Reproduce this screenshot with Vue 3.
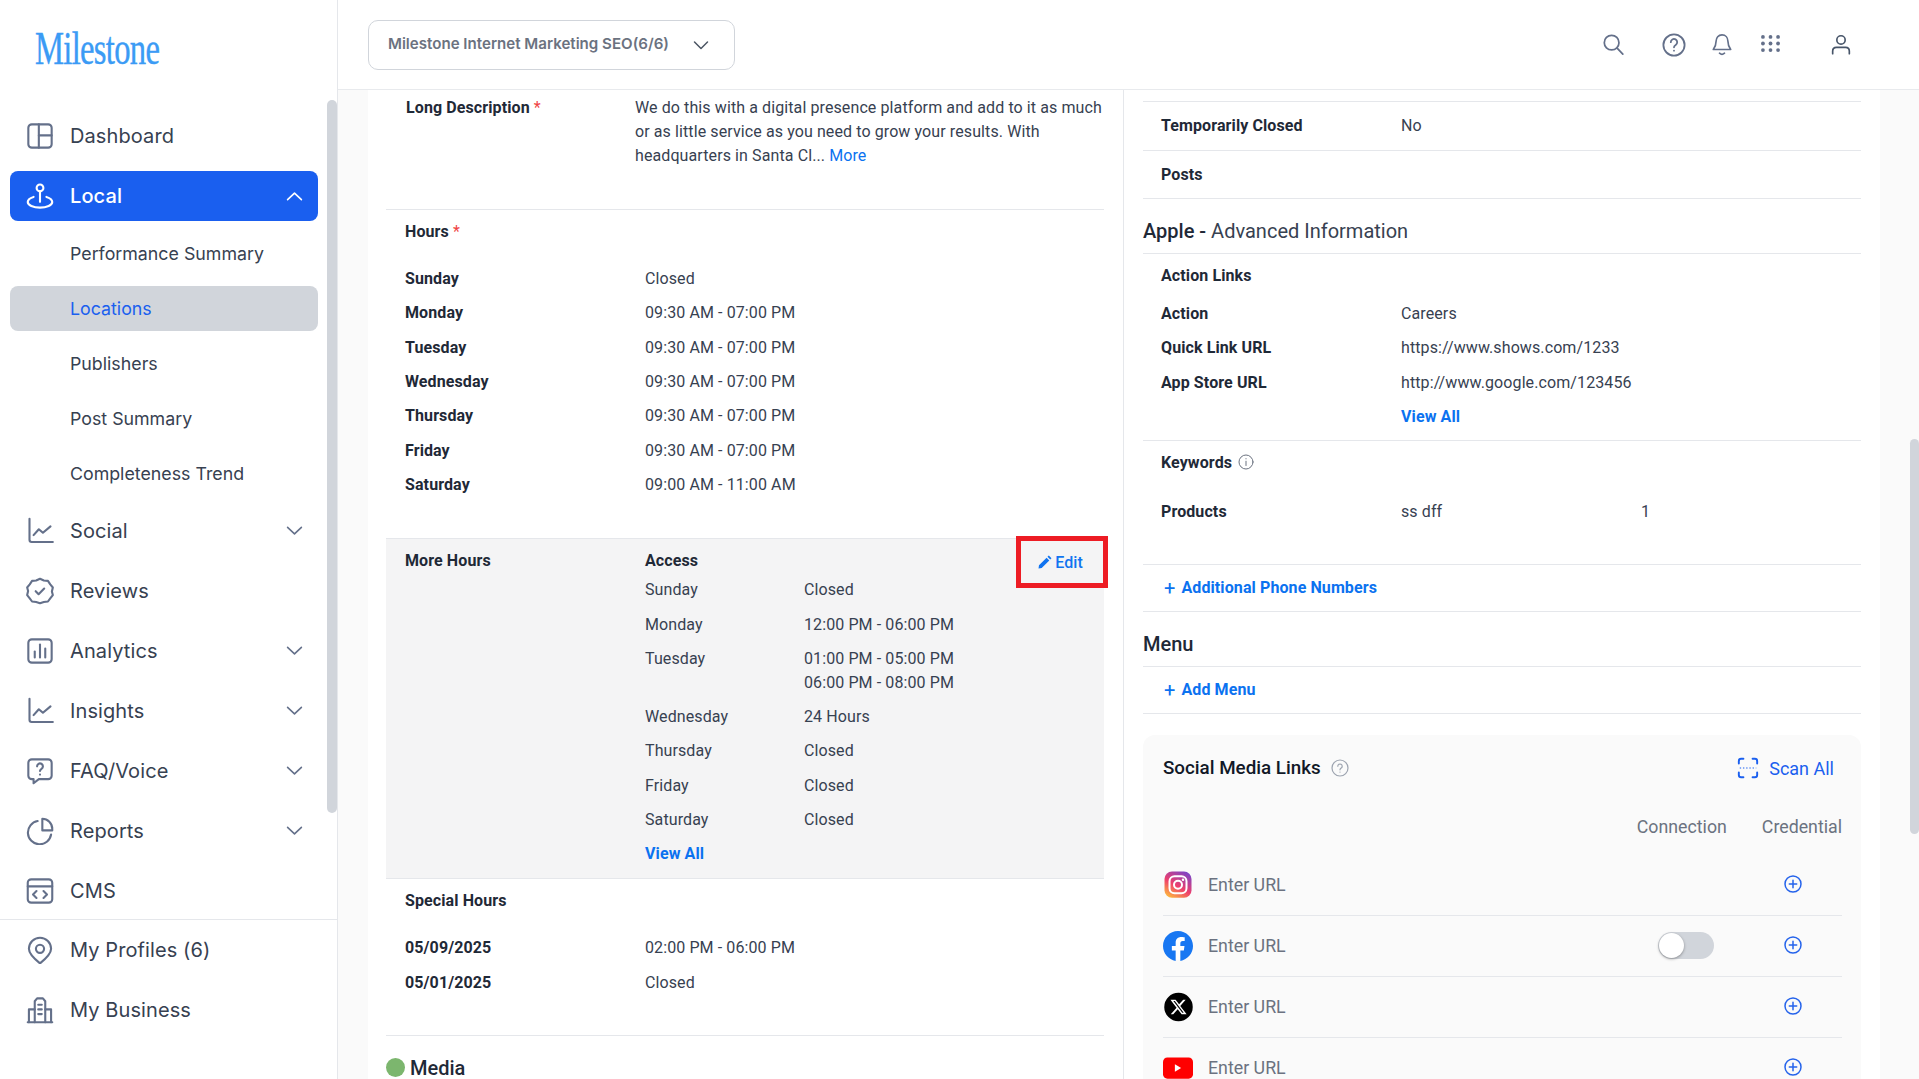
<template>
  <div class="app">
    <aside class="sidebar">
      <div class="logo-wrap"><span class="logo">Milestone</span></div>
      <nav class="nav">
        <template v-for="item in navItems" :key="item.label">
          <div class="nav-item" :class="{ active: item.active }">
            <svg class="nav-icon" viewBox="0 0 24 24" fill="none" stroke="currentColor" stroke-width="1.8" stroke-linecap="round" stroke-linejoin="round">
              <path v-for="d in item.icon" :key="d" :d="d" />
            </svg>
            <span class="nav-label">{{ item.label }}</span>
            <svg v-if="item.chevron" class="nav-chevron" viewBox="0 0 16 16" fill="none" stroke="currentColor" stroke-width="1.5" stroke-linecap="round" stroke-linejoin="round">
              <path :d="item.active ? 'M1.5 11 8 4.8l6.5 6.2' : 'M1.5 5 8 11.2 14.5 5'" />
            </svg>
          </div>
          <div v-if="item.active" class="sub-nav">
            <div v-for="sub in subItems" :key="sub" class="sub-item" :class="{ current: sub === 'Locations' }">{{ sub }}</div>
          </div>
        </template>
        <div class="nav-split"></div>
        <div v-for="item in bottomItems" :key="item.label" class="nav-item">
          <svg class="nav-icon" viewBox="0 0 24 24" fill="none" stroke="currentColor" stroke-width="1.8" stroke-linecap="round" stroke-linejoin="round">
            <path v-for="d in item.icon" :key="d" :d="d" />
          </svg>
          <span class="nav-label">{{ item.label }}</span>
        </div>
      </nav>
      <div class="side-scroll"></div>
    </aside>

    <div class="page">
      <header class="topbar">
        <div class="account-select">
          <span class="account-name">Milestone Internet Marketing SEO(6/6)</span>
          <svg viewBox="0 0 16 16" fill="none" stroke="currentColor" stroke-width="1.5" stroke-linecap="round" stroke-linejoin="round"><path d="M1.5 5 8 11.5 14.5 5" /></svg>
        </div>
        <div class="top-icons">
          <svg class="top-icon search" viewBox="0 0 24 24" fill="none" stroke="currentColor" stroke-width="1.9" stroke-linecap="round"><circle cx="10.5" cy="10.5" r="8" /><path d="m16.5 16.5 6.2 6.5" /></svg>
          <svg class="top-icon help" viewBox="0 0 24 24" fill="none" stroke="currentColor" stroke-width="1.8" stroke-linecap="round"><circle cx="12" cy="12" r="10.6" /><path d="M8.8 9.2a3.2 3.2 0 1 1 4.9 2.7c-1 .7-1.7 1.3-1.7 2.4" /><path d="M12 17.6v.1" /></svg>
          <svg class="top-icon bell" viewBox="0 0 24 24" fill="none" stroke="currentColor" stroke-width="1.8" stroke-linecap="round" stroke-linejoin="round"><path d="M12 1.5c-4 0-6.4 3-6.4 6.8 0 4-1 6.3-3.1 9.2h19c-2.1-2.9-3.1-5.2-3.1-9.2 0-3.8-2.4-6.8-6.4-6.8Z" /><path d="M9.3 21.5c1.5 1.3 3.9 1.3 5.4 0" /></svg>
          <svg class="top-icon grid" viewBox="0 0 20 18" fill="currentColor"><circle v-for="dot in gridDots" :key="dot.x + '-' + dot.y" :cx="dot.x" :cy="dot.y" r="2" /></svg>
          <svg class="top-icon user" viewBox="0 0 24 24" fill="none" stroke="currentColor" stroke-width="2" stroke-linecap="round"><circle cx="12" cy="6.5" r="5" /><path d="M2 23v-3c0-2.800 2-4.500 4.500-4.500h11c2.500 0 4.500 1.700 4.500 4.500v3" /></svg>
        </div>
      </header>

      <main class="content">
        <section class="col col-left">
          <div class="desc-row">
            <div class="label">Long Description <span class="req">*</span></div>
            <div class="desc-text">We do this with a digital presence platform and add to it as much or as little service as you need to grow your results. With headquarters in Santa Cl... <a class="link">More</a></div>
          </div>

          <div class="block-title">Hours <span class="req">*</span></div>
          <div class="hours">
            <div v-for="row in hours" :key="row[0]" class="hours-row">
              <div class="label">{{ row[0] }}</div>
              <div class="value">{{ row[1] }}</div>
            </div>
          </div>

          <div class="more-hours">
            <div class="label">More Hours</div>
            <div class="more-body">
              <div class="label">Access</div>
              <div v-for="row in moreHours" :key="row.day" class="more-row">
                <div class="value">{{ row.day }}</div>
                <div class="value">
                  <div v-for="t in row.times" :key="t">{{ t }}</div>
                </div>
              </div>
              <a class="link strong more-link">View All</a>
            </div>
            <div class="edit-box">
              <svg viewBox="0 0 14 14" fill="currentColor"><path d="M0.5 13.5 1 10.3 8.6 2.7 11.3 5.4 3.7 13ZM9.5 1.8 10.8 .5 13.5 3.2 12.2 4.5Z" /></svg>
              <span>Edit</span>
            </div>
          </div>

          <div class="block-title">Special Hours</div>
          <div class="hours special">
            <div v-for="row in specialHours" :key="row[0]" class="hours-row">
              <div class="label">{{ row[0] }}</div>
              <div class="value">{{ row[1] }}</div>
            </div>
          </div>

          <div class="media-title"><span class="dot"></span>Media</div>
        </section>

        <section class="col col-right">
          <div class="info-row first"><div class="label">Temporarily Closed</div><div class="value">No</div></div>
          <div class="info-row"><div class="label">Posts</div></div>

          <h2 class="apple-title"><b>Apple</b> <b class="dash">-</b> Advanced Information</h2>

          <div class="links-block">
            <div class="sub-title">Action Links</div>
            <div v-for="row in actionLinks" :key="row[0]" class="link-row">
              <div class="label">{{ row[0] }}</div>
              <div class="value">{{ row[1] }}</div>
            </div>
            <div class="link-row"><div></div><a class="link strong">View All</a></div>
          </div>

          <div class="keywords-block">
            <div class="sub-title">
              Keywords
              <svg class="info-icon" viewBox="0 0 16 16" fill="none" stroke="#6b7280" stroke-width="1" stroke-linecap="round"><circle cx="8" cy="8" r="7" /><path d="M8 7.2v4.3M8 4.600v.3" /></svg>
            </div>
            <div class="keyword-row">
              <div class="label">Products</div>
              <div class="value kw">ss dff</div>
              <div class="value">1</div>
            </div>
          </div>

          <div class="add-row"><span class="plus">+</span>Additional Phone Numbers</div>
          <h2 class="menu-title">Menu</h2>
          <div class="add-row"><span class="plus">+</span>Add Menu</div>

          <div class="social-card">
            <div class="social-head">
              <div class="social-title">
                Social Media Links
                <svg class="help-icon" viewBox="0 0 18 18" fill="none" stroke="#9ca3af" stroke-width="1.2" stroke-linecap="round"><circle cx="9" cy="9" r="8" /><path d="M6.8 7.2a2.2 2.2 0 1 1 3.400 1.900c-.7.500-1.200.9-1.200 1.700M9 13v.1" /></svg>
              </div>
              <div class="scan-all">
                <svg viewBox="0 0 24 24" fill="none" stroke="currentColor" stroke-width="2.1" stroke-linecap="round"><path d="M7 2H4.500A2.500 2.500 0 0 0 2 4.500V7M17 2h2.500A2.500 2.500 0 0 1 22 4.500V7M7 22H4.500A2.500 2.500 0 0 1 2 19.500V17M17 22h2.500a2.500 2.500 0 0 0 2.500-2.500V17" /><path d="M3 12h18" stroke-width="1.3" stroke-dasharray="1.5 2" stroke-linecap="butt" /></svg>
                <span>Scan All</span>
              </div>
            </div>
            <div class="social-cols"><span>Connection</span><span>Credential</span></div>

            <div v-for="row in socials" :key="row.name" class="social-row">
              <div class="social-left">
                <svg v-if="row.name === 'instagram'" class="social-icon" viewBox="0 0 24 24">
                  <defs>
                    <linearGradient id="ig" x1="0.2" y1="1" x2="0.8" y2="0">
                      <stop offset="0" stop-color="#fdb63f" />
                      <stop offset="0.45" stop-color="#ee3f6c" />
                      <stop offset="1" stop-color="#7a45c8" />
                    </linearGradient>
                  </defs>
                  <rect x="1.2" y="1.2" width="21.6" height="21" rx="6" fill="url(#ig)" />
                  <rect x="5.2" y="5" width="13.6" height="13.6" rx="4" fill="none" stroke="#fff" stroke-width="1.6" />
                  <circle cx="12" cy="11.8" r="3.2" fill="none" stroke="#fff" stroke-width="1.6" />
                  <circle cx="16" cy="7.8" r="1" fill="#fff" />
                </svg>
                <svg v-else-if="row.name === 'facebook'" class="social-icon" viewBox="0 0 24 24">
                  <circle cx="12" cy="12" r="11" fill="#fff" />
                  <path fill="#1877f2" d="M24 12.073c0-6.627-5.373-12-12-12s-12 5.373-12 12c0 5.990 4.388 10.954 10.125 11.854v-8.385H7.078v-3.470h3.047V9.430c0-3.007 1.792-4.669 4.533-4.669 1.312 0 2.686.235 2.686.235v2.953H15.830c-1.491 0-1.956.925-1.956 1.874v2.250h3.328l-.532 3.470h-2.796v8.385C19.612 23.027 24 18.062 24 12.073z" />
                </svg>
                <svg v-else-if="row.name === 'x'" class="social-icon" viewBox="0 0 24 24">
                  <circle cx="12.4" cy="12" r="11.4" fill="#000" />
                  <path fill="#fff" transform="translate(5.2 4.800) scale(.6)" d="M18.244 2.250h3.308l-7.227 8.260 8.502 11.240H16.170l-5.214-6.817L4.990 21.750H1.680l7.730-8.835L1.254 2.250H8.080l4.713 6.231zm-1.161 17.520h1.833L7.084 4.126H5.117z" />
                </svg>
                <svg v-else class="social-icon" viewBox="0 0 24 24">
                  <rect x="0" y="3.5" width="24" height="17" rx="3.5" fill="#ff0000" />
                  <path d="M9.500 9v6l5-3z" fill="#fff" />
                </svg>
                <span class="url-hint">Enter URL</span>
              </div>
              <div class="social-toggle"><span v-if="row.toggle" class="toggle"><i></i></span></div>
              <svg class="add-icon" viewBox="0 0 18 18" fill="none" stroke="#2563eb" stroke-width="1.5" stroke-linecap="round"><circle cx="9" cy="9" r="8" /><path d="M9 5.300v7.400M5.300 9h7.400" /></svg>
            </div>
          </div>
        </section>
      </main>
      <div class="main-scroll"></div>
    </div>
  </div>
</template>

<script setup>
const chart = ['M3 1.500V19.500c0 1.100.7 1.900 1.800 1.900H23', 'M6.500 15.500l4.500-5 3.500 3 6.500-5.500']
const navItems = [
  { label: 'Dashboard', icon: ['M5 2h14a3 3 0 0 1 3 3v14a3 3 0 0 1-3 3H5a3 3 0 0 1-3-3V5a3 3 0 0 1 3-3Z', 'M11 2v20', 'M11 11.500h11'] },
  { label: 'Local', active: true, chevron: true, icon: ['M12 2.200a2.900 2.900 0 1 1 0 5.800 2.900 2.900 0 0 1 0-5.800Z', 'M12 8v9', 'M6.500 12.800C3.300 13.800 1.500 15.300 1.500 17.200c0 2.700 4.700 4.800 10.500 4.800s10.500-2.100 10.500-4.800c0-1.900-1.800-3.400-5-4.400'] },
  { label: 'Social', chevron: true, icon: chart },
  { label: 'Reviews', icon: ['M12 1.500l3.300 1.500 3.500.3 2 3 2.200 2.700-.8 3.500.8 3-2.200 2.800-2 2.700-3.500.5L12 22.500l-3.300-1-3.500-.5-2-2.700L1 15.500l.8-3.500L1 9l2.200-2.700 2-3 3.500-.3Z', 'M8.300 12.200l2.500 2.500 4.800-4.800'] },
  { label: 'Analytics', chevron: true, icon: ['M5 2h14a3 3 0 0 1 3 3v14a3 3 0 0 1-3 3H5a3 3 0 0 1-3-3V5a3 3 0 0 1 3-3Z', 'M7.500 12.500v5', 'M12 6.500v11', 'M16.500 10v7.500'] },
  { label: 'Insights', chevron: true, icon: chart },
  { label: 'FAQ/Voice', chevron: true, icon: ['M5 2h14a3 3 0 0 1 3 3v11a3 3 0 0 1-3 3H11l-4.500 3.500V19H5a3 3 0 0 1-3-3V5a3 3 0 0 1 3-3Z', 'M9.500 8a2.500 2.500 0 1 1 3.800 2.100c-.8.500-1.300.9-1.300 1.900', 'M12 15v.1'] },
  { label: 'Reports', chevron: true, icon: ['M10 3.500A10 10 0 1 0 21.500 15', 'M14 1.500a8.500 8.500 0 0 1 8.500 8.500v1.500H14Z'] },
  { label: 'CMS', icon: ['M4.500 2h15A3 3 0 0 1 22.500 5v14a3 3 0 0 1-3 3h-15a3 3 0 0 1-3-3V5a3 3 0 0 1 3-3Z', 'M1.500 8h21', 'M9 12l-3 3 3 3', 'M15 12l3 3-3 3'] },
]
const bottomItems = [
  { label: 'My Profiles (6)', icon: ['M12 1.500a9.500 9.500 0 0 1 9.500 9.500c0 4.500-4.500 8.500-9.500 12.500C7 19.500 2.500 15.500 2.500 11A9.500 9.500 0 0 1 12 1.500Z', 'M12 7.500a3.500 3.500 0 1 1 0 7 3.500 3.500 0 0 1 0-7Z'] },
  { label: 'My Business', icon: ['M1.500 22.500h21', 'M2.500 22.500V11.500h5', 'M21.500 22.500V11.500h-5', 'M7.500 22.500V4.500l2-2.500h5l2 2.500v18', 'M10.500 7.500h3', 'M10.500 11.500h3', 'M10.500 15.500h3'] },
]
const subItems = ['Performance Summary', 'Locations', 'Publishers', 'Post Summary', 'Completeness Trend']

const gridDots = []
for (const y of [2, 9, 16]) {
  for (const x of [2, 10, 18]) gridDots.push({ x, y })
}

const hours = [
  ['Sunday', 'Closed'],
  ['Monday', '09:30 AM - 07:00 PM'],
  ['Tuesday', '09:30 AM - 07:00 PM'],
  ['Wednesday', '09:30 AM - 07:00 PM'],
  ['Thursday', '09:30 AM - 07:00 PM'],
  ['Friday', '09:30 AM - 07:00 PM'],
  ['Saturday', '09:00 AM - 11:00 AM'],
]
const moreHours = [
  { day: 'Sunday', times: ['Closed'] },
  { day: 'Monday', times: ['12:00 PM - 06:00 PM'] },
  { day: 'Tuesday', times: ['01:00 PM - 05:00 PM', '06:00 PM - 08:00 PM'] },
  { day: 'Wednesday', times: ['24 Hours'] },
  { day: 'Thursday', times: ['Closed'] },
  { day: 'Friday', times: ['Closed'] },
  { day: 'Saturday', times: ['Closed'] },
]
const specialHours = [
  ['05/09/2025', '02:00 PM - 06:00 PM'],
  ['05/01/2025', 'Closed'],
]
const actionLinks = [
  ['Action', 'Careers'],
  ['Quick Link URL', 'https://www.shows.com/1233'],
  ['App Store URL', 'http://www.google.com/123456'],
]
const socials = [
  { name: 'instagram' },
  { name: 'facebook', toggle: true },
  { name: 'x' },
  { name: 'youtube' },
]
</script>

<style>
html, body { margin: 0; height: 100%; overflow: hidden; background: #fff; }
</style>

<style scoped>
.app {
  display: flex;
  width: 1919px;
  height: 1079px;
  overflow: hidden;
  font-family: Roboto, "Liberation Sans", sans-serif;
  letter-spacing: .1px;
  background: #fff;
}

/* sidebar */
.sidebar {
  position: relative;
  flex: 0 0 338px;
  box-sizing: border-box;
  border-right: 1px solid #e5e7eb;
  font-family: Inter, "Liberation Sans", sans-serif;
  letter-spacing: 0;
}
.logo-wrap { height: 111px; box-sizing: border-box; padding: 22px 0 0 35px; }
.logo {
  display: inline-block;
  font-family: "Liberation Serif", serif;
  font-size: 46px;
  line-height: 54px;
  color: #3b9bf5;
  letter-spacing: -1px;
  -webkit-text-stroke: .4px #3b9bf5;
  transform: scaleX(.71);
  transform-origin: left center;
}
.nav { display: flex; flex-direction: column; }
.nav-item {
  display: flex;
  align-items: center;
  gap: 16px;
  width: 308px;
  height: 50px;
  margin: 0 0 10px 10px;
  padding: 0 16px;
  box-sizing: border-box;
  border-radius: 8px;
  color: #64708a;
}
.nav-item.active { background: #1a5fef; color: #fff; margin-bottom: 9.5px; }
.nav-icon { width: 28px; height: 28px; flex: none; }
.nav-label { flex: 1; font-size: 20px; letter-spacing: .1px; color: #374151; }
.active .nav-label { color: #fff; font-weight: 500; }
.nav-chevron { width: 17px; height: 17px; margin-right: -1px; }
.sub-nav { display: flex; flex-direction: column; gap: 10px; margin-bottom: 10px; }
.sub-item {
  width: 308px;
  height: 45px;
  margin-left: 10px;
  padding-left: 60px;
  box-sizing: border-box;
  border-radius: 8px;
  font-size: 17.8px;
  line-height: 45px;
  color: #374151;
}
.sub-item.current { background: #d1d5db; color: #1a5fef; }
.nav-split { height: 1px; margin: -7px 0 5px; background: #e5e7eb; }
.side-scroll {
  position: absolute;
  left: 327px;
  top: 100px;
  width: 10px;
  height: 713px;
  border-radius: 5px;
  background: #d1d5db;
}

/* top bar */
.page { position: relative; flex: 1; min-width: 0; }
.topbar {
  display: flex;
  align-items: center;
  justify-content: space-between;
  height: 90px;
  box-sizing: border-box;
  padding: 0 0 0 30px;
  border-bottom: 1px solid #e8eaed;
}
.account-select {
  display: flex;
  align-items: center;
  justify-content: space-between;
  flex: none;
  width: 367px;
  height: 50px;
  margin-top: 1px;
  box-sizing: border-box;
  padding: 0 25px 0 19px;
  border: 1px solid #d1d5db;
  border-radius: 10px;
  font-family: Inter, "Liberation Sans", sans-serif;
  font-size: 15.1px;
  font-weight: 600;
  letter-spacing: 0;
  color: #6b7280;
}
.account-name { padding-bottom: 3px; }
.account-select svg { width: 16px; height: 16px; color: #4b5563; }
.top-icons { position: relative; flex: 1; height: 90px; color: #64708a; }
.top-icon { position: absolute; }
.search { left: 867px; top: 33px; width: 22px; height: 22px; }
.help { left: 927px; top: 33px; width: 24px; height: 24px; }
.bell { left: 976px; top: 33px; width: 22px; height: 23px; }
.grid { left: 1026px; top: 35px; width: 19px; height: 17px; }
.user { left: 1096px; top: 34px; width: 20px; height: 21px; color: #475569; }

/* content */
.content {
  display: flex;
  height: 989px;
  overflow: hidden;
  padding-left: 30px;
  background: #fafafa;
}
.col { flex: none; box-sizing: border-box; background: #fff; }
.col-left { width: 756px; padding: 0 19px 0 18px; border-right: 1px solid #e5e7eb; }
.col-right { width: 756px; padding: 11px 19px 0 19px; }

.label { font-size: 16px; line-height: 24px; font-weight: 700; color: #1f2937; }
.value { font-size: 16px; line-height: 24px; color: #374151; }
.req { color: #ef4444; font-weight: 400; }
.link { color: #0b72f0; }
.link.strong { font-size: 16px; line-height: 24px; font-weight: 700; }

.desc-row {
  display: flex;
  height: 120px;
  box-sizing: border-box;
  padding: 6px 0 0 20px;
  border-bottom: 1px solid #e5e7eb;
}
.desc-row .label { width: 229px; flex: none; }
.desc-text { font-size: 16px; line-height: 24px; color: #374151; }

.block-title {
  height: 42px;
  padding-left: 19px;
  margin-bottom: 10px;
  font-size: 16px;
  font-weight: 700;
  line-height: 44px;
  color: #1f2937;
}
.hours { margin-bottom: 36px; }
.hours.special { margin-bottom: 35px; }
.hours-row {
  display: flex;
  align-items: center;
  height: 34.3px;
  padding-left: 19px;
}
.hours-row .label { width: 240px; flex: none; }

.more-hours {
  position: relative;
  display: flex;
  height: 341px;
  box-sizing: border-box;
  padding: 10.1px 0 0 19px;
  background: #f4f4f5;
  border-top: 1px solid #e5e7eb;
  border-bottom: 1px solid #e5e7eb;
}
.more-hours > .label { width: 240px; flex: none; }
.more-body { flex: 1; }
.more-row { display: flex; padding: 5.15px 0; }
.more-row .value:first-child { width: 159px; flex: none; }
.more-link { display: block; margin-top: 5px; }
.edit-box {
  position: absolute;
  left: 630px;
  top: -3px;
  display: flex;
  align-items: center;
  justify-content: center;
  gap: 3px;
  width: 92px;
  height: 52px;
  box-sizing: border-box;
  padding-right: 3px;
  border: 5px solid #ed1c24;
  font-size: 16px;
  font-weight: 500;
  color: #1174f0;
}
.edit-box svg { width: 14px; height: 14px; }

.media-title {
  display: flex;
  align-items: center;
  gap: 5px;
  padding-top: 19px;
  border-top: 1px solid #e5e7eb;
  font-size: 20px;
  font-weight: 500;
  line-height: 26px;
  letter-spacing: 0;
  color: #1f2937;
}
.dot { width: 19px; height: 19px; border-radius: 50%; background: #7cb66e; }

/* right column */
.info-row {
  display: flex;
  align-items: center;
  height: 47px;
  padding-left: 18px;
  border-bottom: 1px solid #e5e7eb;
}
.info-row.first { height: 48px; border-top: 1px solid #e5e7eb; }
.info-row .label { width: 240px; flex: none; }
.apple-title {
  margin: 0;
  height: 55px;
  box-sizing: border-box;
  font-size: 20px;
  font-weight: 400;
  line-height: 65px;
  letter-spacing: 0;
  color: #374151;
  border-bottom: 1px solid #e5e7eb;
}
.apple-title b { font-weight: 500; color: #1f2937; }
.sub-title {
  display: flex;
  align-items: center;
  gap: 6px;
  height: 43px;
  padding-left: 18px;
  font-size: 16px;
  font-weight: 700;
  color: #1f2937;
}
.links-block { padding-bottom: 5.5px; border-bottom: 1px solid #e5e7eb; }
.link-row {
  display: flex;
  align-items: center;
  height: 34.3px;
  padding-left: 18px;
}
.link-row > :first-child { width: 240px; flex: none; }
.keywords-block { height: 124px; box-sizing: border-box; border-bottom: 1px solid #e5e7eb; }
.info-icon { width: 16px; height: 16px; }
.keyword-row {
  display: flex;
  align-items: center;
  height: 34px;
  margin-top: 11px;
  padding-left: 18px;
}
.keyword-row .label { width: 240px; flex: none; }
.keyword-row .kw { width: 240px; flex: none; }
.add-row {
  display: flex;
  align-items: center;
  height: 46px;
  box-sizing: content-box;
  padding: 0 0 0 21px;
  border-bottom: 1px solid #e5e7eb;
  font-size: 16px;
  font-weight: 700;
  color: #0b72f0;
}
.plus { margin-right: 6px; font-size: 20px; font-weight: 400; line-height: 20px; }
.menu-title {
  margin: 0;
  height: 55px;
  box-sizing: border-box;
  padding-top: 19px;
  font-size: 20px;
  font-weight: 500;
  line-height: 26px;
  letter-spacing: 0;
  color: #1f2937;
  border-bottom: 1px solid #e5e7eb;
}
.social-card {
  margin-top: 21px;
  padding: 0 19px 0 20px;
  border-radius: 12px;
  background: #fafafa;
}
.social-head {
  display: flex;
  align-items: center;
  justify-content: space-between;
  height: 67px;
  padding-right: 8px;
}
.social-title {
  display: flex;
  align-items: center;
  gap: 10px;
  font-size: 18.8px;
  font-weight: 500;
  letter-spacing: 0;
  color: #111827;
}
.help-icon { width: 18px; height: 18px; }
.scan-all {
  display: flex;
  align-items: center;
  gap: 10px;
  font-size: 18px;
  letter-spacing: 0;
  color: #1a5fef;
}
.scan-all svg { width: 22px; height: 22px; }
.social-cols {
  display: flex;
  justify-content: flex-end;
  gap: 35px;
  height: 24px;
  margin-top: 13px;
  margin-bottom: 16px;
  font-size: 17.75px;
  letter-spacing: 0;
  line-height: 24px;
  color: #6b7280;
}
.social-row {
  display: grid;
  grid-template-columns: 1fr 56px 128px;
  align-items: center;
  height: 61px;
  box-sizing: border-box;
  border-bottom: 1px solid #e5e7eb;
}
.social-left { display: flex; align-items: center; gap: 15px; }
.social-icon { width: 30px; height: 30px; flex: none; }
.url-hint { font-size: 17.8px; letter-spacing: 0; color: #6b7280; }
.toggle {
  display: block;
  position: relative;
  width: 56px;
  height: 27px;
  border-radius: 14px;
  background: #d1d5db;
}
.toggle i {
  position: absolute;
  left: 1px;
  top: 1px;
  width: 25px;
  height: 25px;
  border-radius: 50%;
  background: #fff;
  box-shadow: 0 1px 3px rgba(0, 0, 0, .35);
}
.add-icon { width: 18px; height: 18px; margin-left: 70px; margin-top: -2px; }
.main-scroll {
  position: absolute;
  right: 0;
  top: 439px;
  width: 9px;
  height: 395px;
  border-radius: 5px;
  background: #d1d5db;
}
</style>
